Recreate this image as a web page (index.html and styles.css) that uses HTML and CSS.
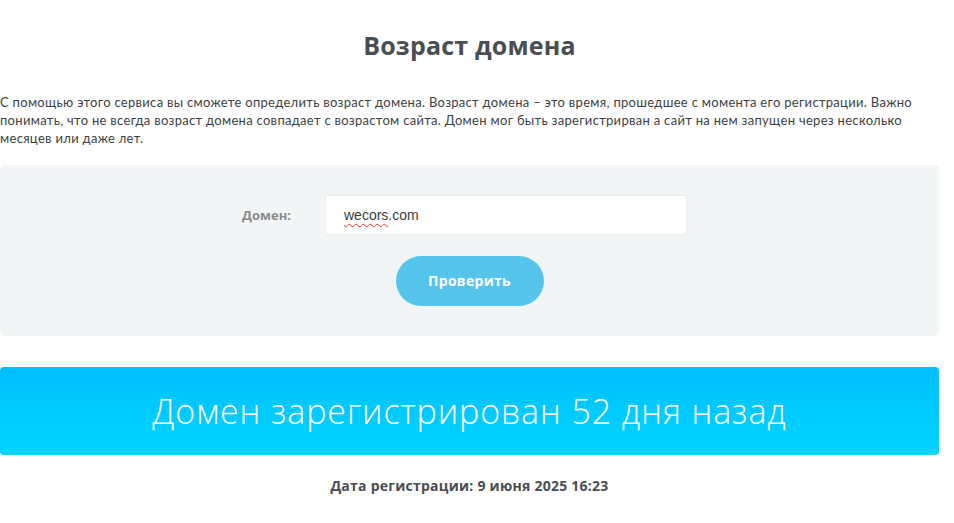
FILE: index.html
```html
<!DOCTYPE html>
<html lang="ru">
<head>
<meta charset="utf-8">
<title>Возраст домена</title>
<link rel="stylesheet" href="styles.css">
</head>
<body>
<div class="wrap">
  <h1 class="title">Возраст домена</h1>
  <p class="intro">С помощью этого сервиса вы сможете определить возраст домена. Возраст домена – это время, прошедшее с момента его регистрации. Важно понимать, что не всегда возраст домена совпадает с возрастом сайта. Домен мог быть зарегистрирван а сайт на нем запущен через несколько месяцев или даже лет.</p>
  <form class="panel">
    <div class="row">
      <label class="label" for="domain">Домен:</label>
      <div class="input"><span class="typo">wecors</span>.com</div>
    </div>
    <div class="actions">
      <button type="button" class="btn">Проверить</button>
    </div>
  </form>
  <div class="result">Домен зарегистрирован 52 дня назад</div>
  <p class="date">Дата регистрации: 9 июня 2025 16:23</p>
</div>
</body>
</html>
```
FILE: styles.css
```css
* { box-sizing: border-box; }
html, body { margin: 0; padding: 0; background: #fff; }
body { font-family: "Open Sans", "DejaVu Sans", sans-serif; color: #3f4246; }
.wrap { width: 939px; }
.title {
  margin: 0;
  padding-top: 30px;
  height: 60px;
  text-align: center;
  font-size: 25px;
  font-weight: 700;
  color: #4a4d52;
  line-height: 30px;
  letter-spacing: 0.2px;
}
.intro {
  margin: 33px 0 0 0;
  font-size: 13px;
  line-height: 18px;
  color: #3c3f44;
  font-family: "Lato", sans-serif;
  letter-spacing: 0.3px;
}
.panel {
  margin-top: 18px;
  background: #f2f5f6;
  border-radius: 5px;
  padding: 30px 0 30px;
  height: 171px;
}
.row { display: flex; align-items: center; height: 40px; }
.label {
  width: 325px;
  padding-left: 242px;
  font-size: 13px;
  font-weight: 700;
  color: #8b8b8b;
}
.input {
  width: 362px;
  height: 40px;
  background: #fff;
  border: 1px solid #e8edef;
  border-radius: 2px;
  padding: 0 18px;
  display: flex;
  align-items: center;
  font-family: "Liberation Sans", sans-serif;
  font-size: 14px;
  color: #3a3d40;
}
.typo {
  text-decoration-line: underline;
  text-decoration-style: wavy;
  text-decoration-color: #e53935;
  text-decoration-thickness: 1px;
  text-underline-offset: 3px;
}
.actions { display: flex; justify-content: center; margin-top: 21px; }
.btn {
  width: 148px;
  height: 50px;
  border: 0;
  border-radius: 25px;
  background: #55c5ec;
  color: #fff;
  font-family: "Open Sans", sans-serif;
  font-weight: 700;
  font-size: 14px;
  letter-spacing: 0.3px;
  padding-bottom: 2px;
}
.result {
  margin-top: 31px;
  height: 88px;
  border-radius: 4px;
  background: linear-gradient(#00bfff, #00d5ff);
  color: #fff;
  display: flex;
  align-items: center;
  justify-content: center;
  font-size: 34px;
  font-weight: 300;
  letter-spacing: 0.9px;
}
.date {
  margin: 21px 0 0;
  text-align: center;
  font-size: 14px;
  font-weight: 700;
  color: #4a4d52;
  letter-spacing: 0.25px;
}
```
